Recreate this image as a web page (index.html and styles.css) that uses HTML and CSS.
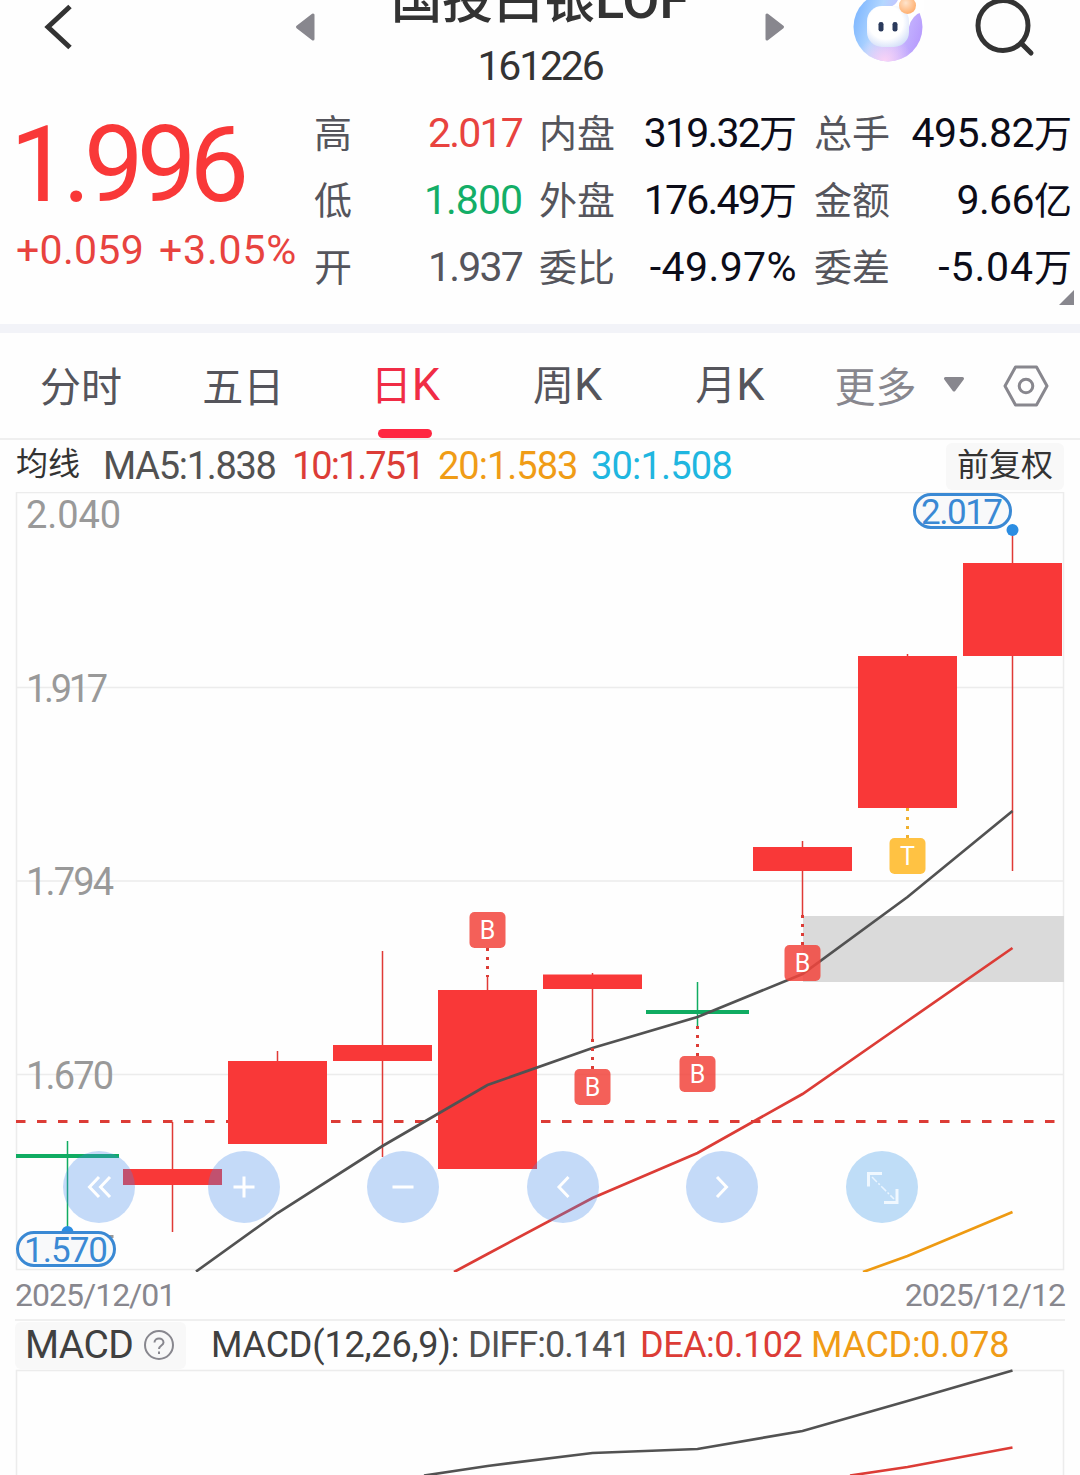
FILE: index.html
```
<!DOCTYPE html>
<html lang="zh-CN">

<head>
    <meta charset="UTF-8">
    <meta name="viewport" content="width=device-width, initial-scale=1.0">
    <title>国投白银LOF</title>
    <link rel="stylesheet" href="styles.css">
</head>

<body>
<!-- 顶部导航 -->
<header class="header">
    <svg class="back" width="90" height="60" viewBox="0 0 90 60"><path d="M70 6.500L48 27L70 47.500"/></svg>
    <svg class="arrow prev" width="22" height="30" viewBox="0 0 22 30"><path d="M19 3V27L3.500 15Z"/></svg>
    <div class="name">
        <h1>国投白银<span>LOF</span></h1>
        <p>161226</p>
    </div>
    <svg class="arrow next" width="22" height="30" viewBox="0 0 22 30"><path d="M3 3V27L18.500 15Z"/></svg>
    <svg class="robot" width="72" height="64" viewBox="852 0 72 64">
        <defs>
            <linearGradient id="ring" x1="0" y1="0.300" x2="1" y2="0.600">
                <stop offset="0" stop-color="#7db6ff"/>
                <stop offset="0.350" stop-color="#b3d7ff"/>
                <stop offset="0.650" stop-color="#c9bcff"/>
                <stop offset="1" stop-color="#b79cfd"/>
            </linearGradient>
            <radialGradient id="glow" cx="0.450" cy="1" r="0.400">
                <stop offset="0" stop-color="#fbd3f6"/>
                <stop offset="1" stop-color="#fbd3f6" stop-opacity="0"/>
            </radialGradient>
            <radialGradient id="face" cx="0.450" cy="0.400" r="0.680">
                <stop offset="0.600" stop-color="#ffffff"/>
                <stop offset="1" stop-color="#cfdcf8"/>
            </radialGradient>
            <radialGradient id="ball" cx="0.400" cy="0.350" r="0.700">
                <stop offset="0" stop-color="#ffe4cc"/>
                <stop offset="1" stop-color="#ffac69"/>
            </radialGradient>
        </defs>
        <circle cx="888" cy="27" r="34.500" fill="url(#ring)"/>
        <circle cx="888" cy="27" r="34.500" fill="url(#glow)"/>
        <path d="M890 7Q899 4 899 -6H930V10Q912 12 909 27Z" fill="#fff"/>
        <rect x="867" y="6" width="42" height="41" rx="15" fill="url(#face)"/>
        <rect x="878.500" y="22" width="5" height="9.500" rx="2.300" fill="#2b3a5c"/>
        <rect x="892.500" y="22" width="5" height="9.500" rx="2.300" fill="#2b3a5c"/>
        <circle cx="907.500" cy="5.500" r="8.500" fill="url(#ball)"/>
    </svg>
    <svg class="search" width="64" height="60" viewBox="972 0 64 60"><circle cx="1003" cy="25.500" r="25"/><path d="M1021 43L1031 53"/></svg>
</header>

<!-- 行情 -->
<section class="quote">
    <div class="price">
        <strong>1.996</strong>
        <p><span>+0.059</span><span class="rate">+3.05%</span></p>
    </div>
    <dl>
        <div><dt>高</dt><dd class="red">2.017</dd></div>
        <div><dt>低</dt><dd class="green">1.800</dd></div>
        <div><dt>开</dt><dd class="gray">1.937</dd></div>
    </dl>
    <dl>
        <div><dt>内盘</dt><dd>319.32<i>万</i></dd></div>
        <div><dt>外盘</dt><dd>176.49<i>万</i></dd></div>
        <div><dt>委比</dt><dd class="minus">-49.97%</dd></div>
    </dl>
    <dl class="wide">
        <div><dt>总手</dt><dd>495.82<i>万</i></dd></div>
        <div><dt>金额</dt><dd>9.66<i>亿</i></dd></div>
        <div><dt>委差</dt><dd class="minus">-5.04<i>万</i></dd></div>
    </dl>
    <span class="corner"></span>
</section>

<!-- 周期切换 -->
<nav class="tabs">
    <a>分时</a>
    <a>五日</a>
    <a class="mixed active">日<b>K</b></a>
    <a class="mixed">周<b>K</b></a>
    <a class="mixed">月<b>K</b></a>
    <a class="more">更多</a>
    <svg class="down" width="22" height="18" viewBox="0 0 22 18"><path d="M2.500 1.500H19.500L11 13Z"/></svg>
    <svg class="setting" width="46" height="42" viewBox="0 0 46 42"><path d="M12.500 2H33.500L44 21L33.500 40H12.500L2 21Z"/><circle cx="23" cy="21" r="6.800"/></svg>
</nav>

<div class="ma">
    <span class="ma-title">均线</span>
    <span class="ma5">MA5:1.838</span>
    <span class="ma10">10:1.751</span>
    <span class="ma20">20:1.583</span>
    <span class="ma30">30:1.508</span>
    <button>前复权</button>
</div>

<!-- 日K图 -->
<svg class="chart" width="1080" height="780" viewBox="0 492 1080 780">
    <g class="grid">
        <rect x="16.500" y="492.500" width="1047" height="777"/>
        <path d="M17 687.500H1063M17 881H1063M17 1074.500H1063"/>
    </g>
    <rect x="803" y="916" width="261" height="66" fill="#dadada"/>
    <g class="axis">
        <text x="26" y="528" textLength="95">2.040</text>
        <text x="26" y="702" textLength="82">1.917</text>
        <text x="26" y="895" textLength="88">1.794</text>
        <text x="26" y="1089" textLength="88">1.670</text>
        <path d="M109 1235H113.500V1238H109Z"/>
    </g>
    <path class="cost" d="M16 1121.500H1060"/>
    <g class="wick">
        <path d="M172.500 1122V1232M277.500 1051V1062M382.500 951V1157M487.500 977V991M592.500 973V1040"/>
        <path d="M802.500 841V916M907.500 654V657M1012.500 530V871"/>
    </g>
    <g class="up">
        <rect x="123" y="1169" width="99" height="16"/>
        <rect x="228" y="1061" width="99" height="83"/>
        <rect x="333" y="1045" width="99" height="16"/>
        <rect x="438" y="990" width="99" height="179"/>
        <rect x="543" y="974.500" width="99" height="14.500"/>
        <rect x="753" y="847" width="99" height="24"/>
        <rect x="858" y="656" width="99" height="152"/>
        <rect x="963" y="563" width="99" height="93"/>
    </g>
    <g class="down-bar">
        <path d="M67.500 1141V1232M697.500 982V1026"/>
        <path class="flat" d="M16 1156H119M646 1012H749"/>
    </g>
    <polyline class="line dark" points="196,1271.500 277.500,1213 382.500,1146 487.500,1085 592.500,1048 697.500,1017 802.500,974 907.500,897 1012.500,811"/>
    <polyline class="line red" points="454,1272 487.500,1254 592.500,1198 697.500,1153 802.500,1094 907.500,1021 1012.500,948"/>
    <polyline class="line orange" points="863,1272 907.500,1256 1012.500,1212"/>

    <!-- 买卖点 -->
    <g class="dots">
        <path d="M487.500 948V977M592.500 1039V1069M697.500 1026V1056M802.500 915V945"/>
        <path class="t" d="M907.500 808V838"/>
    </g>
    <g class="tag">
        <rect x="469.500" y="912" width="36" height="36" rx="5"/><text x="487.500" y="939">B</text>
        <rect x="574.500" y="1069" width="36" height="36" rx="5"/><text x="592.500" y="1096">B</text>
        <rect x="679.500" y="1056" width="36" height="36" rx="5"/><text x="697.500" y="1083">B</text>
        <rect x="784.500" y="945" width="36" height="36" rx="5"/><text x="802.500" y="972">B</text>
        <rect class="t" x="889.500" y="838" width="36" height="36" rx="5"/><text x="907.500" y="865">T</text>
    </g>

    <!-- 最高最低价 -->
    <g class="limit">
        <circle cx="1012.500" cy="530" r="6"/>
        <rect x="914.500" y="494.500" width="96" height="33" rx="16.500"/>
        <text x="921" y="523.500" textLength="82">2.017</text>
        <circle cx="67.500" cy="1232" r="6"/>
        <rect x="17.500" y="1232.500" width="97" height="33" rx="16.500"/>
        <text x="24" y="1261.500" textLength="84">1.570</text>
    </g>

    <!-- 操作按钮 -->
    <g class="ctrl">
        <circle cx="99" cy="1187" r="36"/>
        <circle cx="244" cy="1187" r="36"/>
        <circle cx="403" cy="1187" r="36"/>
        <circle cx="563" cy="1187" r="36"/>
        <circle cx="722" cy="1187" r="36"/>
        <circle class="full" cx="882" cy="1187" r="36"/>
        <path d="M99 1177L89.500 1187L99 1197M110 1177L100.500 1187L110 1197"/>
        <path d="M233.500 1187H254.500M244 1176.500V1197.500M392.500 1187H413.500"/>
        <path d="M568.500 1177L559 1187L568.500 1197M717 1177L726.500 1187L717 1197"/>
        <path class="thin" d="M868.500 1186.500V1173.500H882M884 1202.500H897V1189"/>
        <path class="dash" d="M872 1177L894 1199"/>
    </g>
</svg>

<div class="dates"><span>2025/12/01</span><span>2025/12/12</span></div>

<!-- MACD -->
<div class="macd">
    <button>MACD
        <svg width="32" height="32" viewBox="0 0 32 32"><circle cx="15" cy="16" r="14"/><path d="M10.500 13.500C10.500 8 19.500 8 19.500 13.500C19.500 16.500 15 16.500 15 20"/><path d="M15 22.500V25"/></svg>
    </button>
    <span class="param">MACD(12,26,9):</span>
    <span class="diff">DIFF:0.141</span>
    <span class="dea">DEA:0.102</span>
    <span class="val">MACD:0.078</span>
</div>
<svg class="chart" width="1080" height="106" viewBox="0 1369 1080 106">
    <g class="grid"><path d="M16.500 1475V1370.500H1063.500V1475"/></g>
    <polyline class="line dark" points="424,1475.500 487.500,1466 592.500,1453 697.500,1449 802.500,1431 907.500,1401 1012.500,1370.500"/>
    <polyline class="line red" points="850,1475.500 907.500,1467 1012.500,1447.500"/>
</svg>
</body>

</html>
```

FILE: styles.css
```
* {
    margin: 0;
    padding: 0;
    box-sizing: border-box;
}

body {
    width: 1080px;
    height: 1475px;
    overflow: hidden;
    background: #fefefe;
    color: #333;
    font-family: Roboto, "Noto Sans CJK SC", sans-serif;
}

svg {
    display: block;
    flex: none;
}

button {
    border: 0;
    font-family: inherit;
}

/* 顶部 */
.header {
    display: flex;
    height: 100px;
    overflow: hidden;
}
.back path {
    fill: none;
    stroke: #333;
    stroke-width: 5;
}
.arrow {
    margin-top: 12px;
    fill: #88878e;
    stroke: #88878e;
    stroke-width: 3;
    stroke-linejoin: round;
}
.prev {
    margin-left: 204px;
}
.name {
    width: 448px;
    text-align: center;
}
.name h1 {
    height: 62px;
    margin-top: -26px;
    font-size: 51px;
    font-weight: 500;
    line-height: 52px;
    white-space: nowrap;
}
.name h1 span {
    font-size: 54px;
    letter-spacing: -0.2px;
}
.name p {
    font-size: 41px;
    line-height: 60px;
    letter-spacing: -2.2px;
}
.robot {
    margin-left: 66px;
}
.search {
    margin-left: 48px;
    fill: none;
    stroke: #333;
    stroke-width: 5;
    stroke-linecap: round;
}

/* 行情 */
.quote {
    position: relative;
    display: flex;
    gap: 17px;
    height: 224px;
    padding: 0 8px 0 16px;
}
.price {
    width: 281px;
    color: #f93838;
    white-space: nowrap;
}
.price strong {
    display: block;
    height: 120px;
    margin-left: -6px;
    font-size: 106px;
    font-weight: 400;
    line-height: 131px;
    letter-spacing: -6.8px;
}
.price p {
    display: flex;
    gap: 15px;
    color: #e8433f;
    font-size: 41px;
    line-height: 60px;
    letter-spacing: 0.3px;
}
.price .rate {
    letter-spacing: 0.8px;
}
.quote dl:nth-of-type(1) {
    width: 208px;
}
.quote dl {
    width: 258px;
}
.quote dl div {
    display: flex;
    justify-content: space-between;
    height: 67px;
    line-height: 67px;
    white-space: nowrap;
}
.quote dt {
    color: #55555c;
    font-size: 38px;
    line-height: 69px;
}
.quote dd {
    color: #0c0c18;
    font-size: 41px;
    letter-spacing: -1.8px;
}
.quote .wide dd {
    letter-spacing: -0.6px;
}
.quote .minus {
    letter-spacing: 0.4px;
}
.quote .wide .minus {
    letter-spacing: 0.9px;
}
.quote dd i {
    font-size: 38px;
    font-style: normal;
    letter-spacing: 0;
}
.quote .red {
    color: #e8433f;
}
.quote .green {
    color: #13ae67;
    letter-spacing: -1px;
}
.quote .gray {
    color: #55555c;
}
.corner {
    position: absolute;
    right: 6px;
    bottom: 19px;
    border-left: 15px solid transparent;
    border-bottom: 15px solid #88878e;
}

/* 周期 */
.tabs {
    display: flex;
    align-items: center;
    height: 116px;
    border-top: 9px solid #f2f3f8;
    border-bottom: 2px solid #efefef;
}
.tabs a {
    position: relative;
    width: 162.2px;
    height: 105px;
    color: #55555c;
    font-size: 41px;
    line-height: 111px;
    text-align: center;
}
.tabs .mixed {
    line-height: 103px;
}
.tabs b {
    font-size: 45px;
    font-weight: 400;
}
.tabs .active {
    color: #f02c45;
}
.tabs .active::after {
    content: '';
    position: absolute;
    left: 54px;
    bottom: 0;
    width: 54px;
    height: 9px;
    border-radius: 5px;
    background: #ff2742;
}
.tabs .more {
    width: 129px;
    color: #88878e;
}
.down {
    margin-left: 3px;
    fill: #88878e;
    stroke: #88878e;
    stroke-width: 3;
    stroke-linejoin: round;
}
.setting {
    margin-left: 38px;
    fill: none;
    stroke: #88878e;
    stroke-width: 3;
    stroke-linejoin: round;
}

/* 均线 */
.ma {
    display: flex;
    align-items: center;
    height: 52px;
    padding: 0 16px;
    font-size: 38px;
    letter-spacing: -1px;
    white-space: nowrap;
}
.ma-title {
    width: 87px;
    padding-bottom: 10px;
    font-size: 32px;
    letter-spacing: 0;
}
.ma5 {
    width: 189px;
    color: #525252;
    letter-spacing: -1.3px;
}
.ma10 {
    width: 146px;
    color: #dc3c36;
    letter-spacing: -2px;
}
.ma20 {
    width: 153px;
    color: #f09c16;
}
.ma30 {
    color: #20b6e0;
    letter-spacing: -0.8px;
}
.ma button {
    width: 118px;
    height: 47px;
    margin-left: auto;
    padding-bottom: 3px;
    border-radius: 6px;
    background: #f8f8f8;
    color: #333;
    font-size: 32px;
    line-height: 44px;
}

/* 图表 */
.grid {
    fill: none;
    stroke: #ececec;
    stroke-width: 1.5;
}
.axis {
    fill: #999;
    font-size: 38px;
}
.cost {
    stroke: #dc3c36;
    stroke-width: 3;
    stroke-dasharray: 9.500 11.500;
}
.wick {
    stroke: #e03a36;
    stroke-width: 1.5;
}
.up {
    fill: #f93838;
}
.down-bar {
    stroke: #10ac62;
    stroke-width: 1.5;
}
.down-bar .flat {
    stroke-width: 4;
}
.line {
    fill: none;
    stroke-width: 2.7;
}
.dark {
    stroke: #525252;
}
.line.red {
    stroke: #dc3c36;
}
.orange {
    stroke: #ee9a12;
}
.dots {
    stroke: #dc3c36;
    stroke-width: 3;
    stroke-dasharray: 3 6;
}
.dots .t {
    stroke: #f0b02e;
}
.tag rect {
    fill: #f2443c;
    fill-opacity: 0.85;
}
.tag .t {
    fill: #ffc243;
    fill-opacity: 1;
}
.tag text {
    fill: #fff;
    font-size: 25px;
    text-anchor: middle;
}
.limit rect {
    fill: #f8f9fa;
    stroke: #3a89d4;
    stroke-width: 3;
}
.limit circle {
    fill: #2b8de2;
}
.limit text {
    fill: #3a89d4;
    font-size: 35px;
}
.ctrl circle {
    fill: rgba(68, 139, 235, 0.31);
}
.ctrl .full {
    fill: #bfddf7;
}
.ctrl path {
    fill: none;
    stroke: #fff;
    stroke-width: 3;
}
.ctrl .thin {
    stroke: #f0f8ff;
}
.ctrl .dash {
    stroke: #eaf5ff;
    stroke-width: 1.5;
    stroke-dasharray: 7 2 2 2;
}

.dates {
    display: flex;
    justify-content: space-between;
    height: 49px;
    margin: 0 15px;
    border-bottom: 2px solid #efefef;
    color: #88878e;
    font-size: 32px;
    line-height: 46px;
    letter-spacing: -1px;
}

/* MACD */
.macd {
    display: flex;
    align-items: center;
    height: 48px;
    padding-left: 15px;
    font-size: 36px;
    white-space: nowrap;
}
.macd button {
    display: flex;
    align-items: center;
    justify-content: space-between;
    width: 171px;
    height: 47px;
    margin-right: 25px;
    padding: 0 10px;
    border-radius: 6px;
    background: #f8f8f8;
    color: #404040;
    font-size: 39px;
    letter-spacing: -0.6px;
}
.macd svg {
    fill: none;
    stroke: #88878e;
    stroke-width: 2;
}
.param {
    width: 257px;
    color: #404040;
    letter-spacing: -0.2px;
}
.diff {
    width: 172px;
    color: #525252;
    letter-spacing: -1px;
}
.dea {
    width: 171px;
    color: #dc3c36;
    letter-spacing: -0.5px;
}
.val {
    color: #f09c16;
    letter-spacing: -0.3px;
}
```
